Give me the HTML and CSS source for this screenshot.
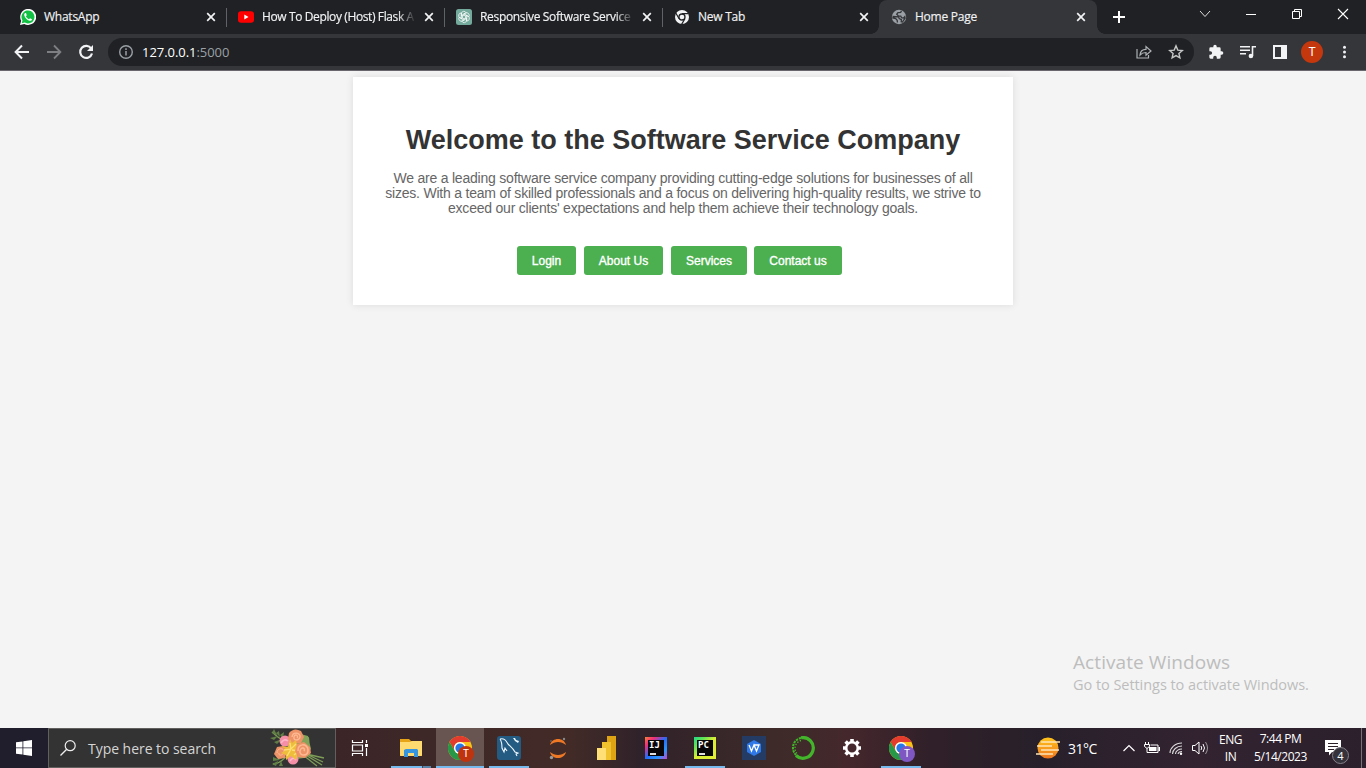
FILE: index.html
```html
<!DOCTYPE html>
<html lang="en">
<head>
<meta charset="utf-8">
<title>Home Page</title>
<link rel="stylesheet" href="styles.css">
</head>
<body>
<svg class="defs" width="0" height="0">
  <symbol id="close" viewBox="0 0 10 10"><path d="M1.200 1.200l7.600 7.600M8.800 1.200l-7.600 7.600" stroke="#f1f3f4" stroke-width="1.700"/></symbol>
  <symbol id="chrome" viewBox="0 0 24 24">
    <circle cx="12" cy="12" r="12" fill="#fbc116"/>
    <path d="M1.600 6A12 12 0 0 1 22.400 6H12a6 6 0 0 0-5.200 9z" fill="#e33b2e"/>
    <path d="M1.600 6A12 12 0 0 0 12 24l5.200-9A6 6 0 0 1 6.800 15z" fill="#279847"/>
    <circle cx="12" cy="12" r="6" fill="#fff"/><circle cx="12" cy="12" r="4.600" fill="#2678e8"/>
  </symbol>
</svg>

<header class="tabs">
  <div class="tab t1">
    <svg class="fav" viewBox="0 0 16 16"><path d="M0 16l1.200-4.200A8 8 0 1 1 4.300 14.900z" fill="#fff"/><path d="M1.700 14.300l.8-2.800A6.500 6.500 0 1 1 4.700 13.600z" fill="#12c143"/><path d="M5.200 4c-.9.500-1.200 1.500-.8 2.700.8 2.400 2.600 4.200 5 5 1.200.4 2.400-.2 2.600-1.500L10 9.200l-1 1C7.600 9.700 6.500 8.600 5.900 7.200l.9-1L6 4z" fill="#fff"/></svg>
    <span class="title">WhatsApp</span><svg class="x"><use href="#close"/></svg>
  </div>
  <div class="tab t2">
    <svg class="fav" viewBox="0 0 16 16"><rect y="2.300" width="16" height="11.400" rx="3" fill="#f00"/><path d="M6.300 5.500l4.200 2.500-4.200 2.500z" fill="#fff"/></svg>
    <span class="title fade">How To Deploy (Host) Flask A</span><svg class="x"><use href="#close"/></svg>
  </div>
  <div class="tab t3">
    <svg class="fav" viewBox="0 0 16 16"><rect width="16" height="16" rx="2.500" fill="#74aa9c"/><g fill="none" stroke="#fff" stroke-width=".7"><path id="petal" d="M8 9.900L5.300 8.400V4.900a2.600 2.600 0 0 1 4.900-1.200L7.300 5.400"/><use href="#petal" transform="rotate(60 8 8)"/><use href="#petal" transform="rotate(120 8 8)"/><use href="#petal" transform="rotate(180 8 8)"/><use href="#petal" transform="rotate(240 8 8)"/><use href="#petal" transform="rotate(300 8 8)"/></g></svg>
    <span class="title fade">Responsive Software Service</span><svg class="x"><use href="#close"/></svg>
  </div>
  <div class="tab t4">
    <svg class="fav" viewBox="0 0 16 16"><circle cx="8" cy="8" r="7" fill="#f1f3f4"/><circle cx="8" cy="8" r="3" fill="#f1f3f4" stroke="#202124" stroke-width="1.300"/><path d="M8 4.600h6.500M5.100 9.700L1.800 4M10.900 9.700L7.600 15.400" stroke="#202124" stroke-width="1.200"/></svg>
    <span class="title">New Tab</span><svg class="x"><use href="#close"/></svg>
  </div>
  <div class="tab t5">
    <svg class="fav" viewBox="0 0 16 16"><circle cx="8" cy="8" r="7.200" fill="#9aa0a6"/><path d="M10.500 1.800L9.700 3.300 7 3.600 5.700 5.300 7.300 6.800l2.500.2.700 1.700 2.100.3 1.200-1.400.3 1.400-2.700 4-1.200-.3.200-2-2.200-1.200-.6-1.700L2.200 7.500 1.900 9l2.800.5 1.500 1.700.2 2.300" fill="none" stroke="#35363a" stroke-width="1.300"/></svg>
    <span class="title">Home Page</span><svg class="x"><use href="#close"/></svg>
  </div>
  <svg class="plus" viewBox="0 0 12 12"><path d="M6 0v12M0 6h12" stroke="#fff" stroke-width="2"/></svg>
  <div class="controls">
    <svg viewBox="0 0 12 12"><path d="M1 3l5 5.500L11 3" fill="none" stroke="#ddd"/></svg>
    <svg viewBox="0 0 12 12"><path d="M1 6.500h10" stroke="#fff"/></svg>
    <svg viewBox="0 0 12 12"><path d="M1.500 3.500h7v7h-7zM3.500 3.500v-2h7v7h-2" fill="none" stroke="#fff"/></svg>
    <svg viewBox="0 0 12 12"><path d="M1 1l10 10M11 1L1 11" stroke="#fff" stroke-width="1.100"/></svg>
  </div>
</header>

<nav class="toolbar">
  <svg class="nav" viewBox="0 0 16 16"><path d="M15 8H2M8 1.500L1.600 8 8 14.500" fill="none" stroke="#f1f3f4" stroke-width="2"/></svg>
  <svg class="nav" viewBox="0 0 16 16"><path d="M1 8h13M8 1.500L14.400 8 8 14.500" fill="none" stroke="#7d7f83" stroke-width="1.800"/></svg>
  <svg class="nav" viewBox="0 0 16 16"><path d="M13.200 4.500A6 6 0 1 0 14 9.500" fill="none" stroke="#f1f3f4" stroke-width="2.200"/><path d="M15 1v6H9z" fill="#f1f3f4"/></svg>
  <div class="address">
    <svg class="info" viewBox="0 0 14 14"><circle cx="7" cy="7" r="6.300" fill="none" stroke="#9aa0a6" stroke-width="1.400"/><path d="M7 6v4.500M7 3.300v1.600" stroke="#9aa0a6" stroke-width="1.500"/></svg>
    <span class="url">127.0.0.1<span>:5000</span></span>
    <svg class="act" viewBox="0 0 16 16"><path d="M1 5v9h11.500v-3M4 11c.3-3.800 2.500-5.700 6-5.700V2.500L15 7l-5 4.300V8.500C7.500 8.500 5.800 9 4 11z" fill="none" stroke="#aeb1b5" stroke-width="1.200"/></svg>
    <svg class="act" viewBox="0 0 16 16"><path d="M8 1.900l1.800 4.200 4.500.4-3.400 3 1 4.400L8 11.600l-3.900 2.300 1-4.400-3.400-3 4.500-.4z" fill="none" stroke="#c4c7c5" stroke-width="1.400"/></svg>
  </div>
  <div class="tools">
    <svg viewBox="0 0 24 24"><path d="M20.500 11H19V7a2 2 0 0 0-2-2h-4V3.500a2.500 2.500 0 0 0-5 0V5H4a2 2 0 0 0-2 2v3.800h1.500a2.700 2.700 0 0 1 0 5.400H2V20a2 2 0 0 0 2 2h3.800v-1.500a2.700 2.700 0 0 1 5.400 0V22H17a2 2 0 0 0 2-2v-4h1.500a2.500 2.500 0 0 0 0-5z" fill="#f1f3f4"/></svg>
    <svg viewBox="0 0 16 16"><path d="M0 2.700h10M0 6.200h10M0 9.700h6M12.500 12V2.700H16" fill="none" stroke="#f1f3f4" stroke-width="1.600"/><circle cx="10.900" cy="12" r="2.300" fill="#f1f3f4"/></svg>
    <svg viewBox="0 0 16 16"><path d="M1 1h14v14H1zM3 3v10h6V3z" fill="#f1f3f4" fill-rule="evenodd"/></svg>
    <b class="avatar">T</b>
    <svg viewBox="0 0 16 16"><g fill="#f1f3f4"><circle cx="8.500" cy="3.200" r="1.500"/><circle cx="8.500" cy="8" r="1.500"/><circle cx="8.500" cy="12.800" r="1.500"/></g></svg>
  </div>
</nav>

<main class="page">
  <section class="card">
    <h1>Welcome to the Software Service Company</h1>
    <p>We are a leading software service company providing cutting-edge solutions for businesses of all<br>sizes. With a team of skilled professionals and a focus on delivering high-quality results, we strive to<br>exceed our clients' expectations and help them achieve their technology goals.</p>
    <div class="buttons"><a class="b1">Login</a><a class="b2">About Us</a><a class="b3">Services</a><a class="b4">Contact us</a></div>
  </section>
  <aside class="watermark"><div class="wm1">Activate Windows</div><div class="wm2">Go to Settings to activate Windows.</div></aside>
</main>

<footer class="taskbar">
  <div class="start"><svg viewBox="0 0 16 16"><path d="M0 2.300L6.500 1.400v6.100H0zM7.300 1.300L16 0v7.500H7.300zM0 8.300h6.500v6.200L0 13.700zM7.300 8.300H16V16l-8.700-1.300z" fill="#fff"/></svg></div>
  <div class="search">
    <svg class="lens" viewBox="0 0 16 16"><circle cx="10.200" cy="5.700" r="5" fill="none" stroke="#eee" stroke-width="1.200"/><path d="M6.700 9.300L.5 15.500" stroke="#eee" stroke-width="1.300"/></svg>
    <span class="prompt">Type here to search</span>
    <svg class="flowers" viewBox="0 0 56 38">
      <g fill="none" stroke="#7d9c55" stroke-width="1.300"><path d="M2 3c4 4 8 7 14 10M3 35c5 0 9-3 13-7M34 25l18 11M36 25l18 4M33 26l14 11M36 25l17 8"/></g>
      <g fill="#607f45"><path d="M4 0l3 6-5-2zM9 2l1 6-4-4zM14 3l-1 7-3-4zM0 9l8-2-4 4zM4 13l8-3-5 5zM3 28l7 3-7 1zM8 26l5 3-5 2zM9 37l2-5 2 5zM2 35l6-3-2 5z"/></g>
      <path d="M17 10l6-7 15 4 3 13-7 9-16 2zM32 12l7-4 1 10z" fill="#83a35a"/>
      <circle cx="15" cy="12" r="5.500" fill="#f58fa8"/><circle cx="23" cy="30" r="5.500" fill="#f58fa8"/>
      <path d="M11 14q3-5 7-2M20 32q3-5 6-1" fill="none" stroke="#ffb8c8" stroke-width="1.500"/>
      <path d="M19 4q5-6 12-2l3 6-3 6-9 1-4-5z" fill="#ed9367"/><path d="M22 8c1-6 9-4 8 0s-7 4-6 0 5-1 3 1" fill="none" stroke="#ffba94" stroke-width="1.300"/>
      <path d="M7 18l6-1 4 5-2 7-7 1-4-5z" fill="#ed9367"/><path d="M7 24c0-6 8-5 7-1s-6 4-5 1" fill="none" stroke="#ffba94"/>
      <path d="M20 10l2 4 4-3 1 5 5-1-2 5 4 2-6 3-2 6-5-4-5 4v-5l-5-2 5-3-4-4 6 1z" fill="#efbd3c"/><path d="M20 14l1 6 5-5M14 21l7-1-4 7M22 21l7 1-5 4" fill="none" stroke="#ffdf74" stroke-width="1.300"/>
      <path d="M27 15l7-2 6 5 1 6-6 5-7-1-3-6z" fill="#ed9367"/><path d="M28 22c-1-8 10-8 10-1s-9 6-8 1 6-3 4 0" fill="none" stroke="#ffba94" stroke-width="1.500"/>
    </svg>
  </div>
  <div class="apps">
    <div class="app view"><svg width="18" height="18" viewBox="0 0 18 18"><path d="M1.500 1v2.500h10V1M1.500 17v-2.500h10V17M1.500 6h10v6h-10zM15.500 1v3M15.500 9v8" fill="none" stroke="#fff" stroke-width="1.200"/><path d="M14 5h3v3h-3z" fill="#fff"/></svg></div>
    <div class="app run split"><svg width="22" height="20" viewBox="0 0 22 20"><path d="M0 1h9l2 2h10a1 1 0 0 1 1 1v14H0z" fill="#e8a417"/><path d="M0 4h10l2-1h10v14a1 1 0 0 1-1 1H1a1 1 0 0 1-1-1z" fill="#ffda70"/><path d="M4 19v-7l2-1h11l1 1v7h-4v-4H8v4z" fill="#3795df"/></svg></div>
    <div class="app run active"><svg width="24" height="24"><use href="#chrome"/></svg><b class="badge">T</b></div>
    <div class="app run"><svg width="24" height="24" viewBox="0 0 24 24"><rect width="24" height="24" rx="3" fill="#245b82"/><path d="M3 3c5-1 6 2 8 5 3 3 5 4 7 8l3 1-2 1 1 2M3 3c2 3 2 5 2 9l2 4 1-4 2 3" fill="none" stroke="#eef8ff" stroke-width="1.100"/><path d="M16 2l2 0 1 2 3 1-1 2-3-2z" fill="#eef8ff"/></svg></div>
    <div class="app"><svg width="20" height="23" viewBox="0 0 20 23"><path d="M2 8c2-8 14-8 16 0-5-4-11-4-16 0zM2 15c2 8 14 8 16 0-5 4-11 4-16 0z" fill="#ef7825"/><circle cx="16" cy="2" r="1.200" fill="#888"/><circle cx="3.500" cy="20.500" r="1.700" fill="#999"/><circle cx="3" cy="4" r=".8" fill="#777"/></svg></div>
    <div class="app"><svg width="20" height="24" viewBox="0 0 20 24"><path d="M10 0h9v24h-9z" fill="#dfa414"/><path d="M5 6h9v18H5z" fill="#efc22e"/><path d="M0 12h9v12H0z" fill="#ffdf76"/></svg></div>
    <div class="app"><span class="jb ij">IJ</span></div>
    <div class="app run"><span class="jb pc">PC</span></div>
    <div class="app"><svg width="24" height="24" viewBox="0 0 24 24"><rect width="24" height="24" fill="#243b64"/><path d="M12 4l7 4v8l-7 4-7-4V8z" fill="#2e78e8"/><path d="M7 9l2.500 6L12 9l2.500 6L17 9h-5" fill="none" stroke="#fff" stroke-width="1.300"/></svg></div>
    <div class="app"><svg width="24" height="24" viewBox="0 0 24 24"><path d="M10 1.800A10.300 10.300 0 1 1 5 19.500" fill="none" stroke="#43b52b" stroke-width="3.200"/><path d="M10 2A10 10 0 0 0 5 19" fill="none" stroke="#43b52b" stroke-width="2" stroke-dasharray="2.300 .9"/><path d="M10 4.500A8 8 0 0 0 6 17.500" fill="none" stroke="#43b52b" stroke-width="1.300" stroke-dasharray="1.400 1.500"/></svg></div>
    <div class="app"><svg width="20" height="20" viewBox="0 0 20 20"><circle cx="10" cy="10" r="5.800" fill="none" stroke="#fff" stroke-width="2.500"/><g stroke="#fff" stroke-width="3.600"><path d="M10 1v3M10 16v3M1 10h3M16 10h3M3.600 3.600l2 2M14.400 14.400l2 2M3.600 16.400l2-2M14.400 5.600l2-2"/></g></svg></div>
    <div class="app run"><svg width="24" height="24"><use href="#chrome"/></svg><b class="badge purple">T</b></div>
  </div>
  <div class="weather"><svg viewBox="0 0 24 22"><defs><linearGradient id="sun" x2="0" y2="1"><stop stop-color="#ffc51b"/><stop offset="1" stop-color="#ef7520"/></linearGradient></defs><circle cx="12" cy="11" r="10.500" fill="url(#sun)"/><path d="M5 5h19M1 9h15M5 13h18M0 17h17" stroke="#ffe5b8" stroke-width="1.600"/></svg><span>31°C</span></div>
  <div class="tray">
    <svg width="12" height="8" viewBox="0 0 12 8"><path d="M.5 7L6 1.500 11.500 7" fill="none" stroke="#fff" stroke-width="1.200"/></svg>
    <svg width="16" height="12" viewBox="0 0 16 12"><path d="M1.500 0v2M4.500 0v2M.5 2.500h5v2l-2 1.500H2.500l-2-1.500zM3 6v4.500h11V3H6.500" fill="none" stroke="#fff"/><path d="M5 5h7.500v4H5zM14.500 5H16v4h-1.500z" fill="#fff"/></svg>
    <svg width="14" height="13" viewBox="0 0 14 13"><g fill="none" stroke="#ddd" stroke-width="1.100"><path d="M1 11C1 6 6 1 13 1M3.500 12C3.500 8 7.500 4 13 4M6.500 12c0-3 3-5 6.500-5M9 12c.3-1.500 2-2.500 4-2.500"/></g><circle cx="12" cy="11.700" r="1.200" fill="#fff"/></svg>
    <svg width="17" height="14" viewBox="0 0 17 14"><path d="M.5 4.500H3L7 1v12L3 9.500H.5z" fill="none" stroke="#fff"/><path d="M9 5q1.500 2 0 4M11 3q3 4 0 8" fill="none" stroke="#fff"/><path d="M13.500 1q4 6 0 12" fill="none" stroke="#999"/></svg>
  </div>
  <div class="lang"><span>ENG</span><span>IN</span></div>
  <div class="clock"><span>7:44 PM</span><span>5/14/2023</span></div>
  <div class="notes"><svg viewBox="0 0 16 16"><path d="M0 0h16v12H7l-3 3.500V12H0z" fill="#fff"/><path d="M3 3.500h10M3 6.500h10M3 9.500h6" stroke="#2c2029"/></svg><i>4</i></div>
</footer>
</body>
</html>
```
FILE: styles.css
```css
* { box-sizing: border-box; }
body { margin: 0; width: 1366px; height: 768px; overflow: hidden; display: flex; flex-direction: column; font-family: "Open Sans", "Noto Sans", sans-serif; }
svg { display: block; flex: none; }
.defs { position: absolute; }

.tabs { height: 34px; background: #202124; display: flex; padding-left: 8px; color: #f1f3f4; }
.tab { height: 34px; flex: none; display: flex; align-items: center; width: 218px; padding: 0 11px; position: relative; }
.t1 { width: 219px; padding-left: 12px; }
.t1::after, .t2::after, .t3::after { content: ""; position: absolute; right: 0; top: 8px; width: 1px; height: 19px; background: #5f6368; }
.t4 { width: 216px; padding-right: 10px; }
.t5 { width: 218px; padding-left: 12px; background: #35363a; border-radius: 8px 8px 0 0; }
.t5::before, .t5::after { content: ""; position: absolute; bottom: 0; width: 8px; height: 8px; }
.t5::before { left: -8px; background: radial-gradient(circle at 0 0, #202124 7.500px, #35363a 8px); }
.t5::after { right: -8px; background: radial-gradient(circle at 100% 0, #202124 7.500px, #35363a 8px); }
.fav { width: 16px; height: 16px; margin-right: 8px; }
.title { flex: 1; min-width: 0; font-size: 12px; letter-spacing: -.25px; white-space: nowrap; line-height: 18px; -webkit-text-stroke: .15px #f1f3f4; }
.fade { -webkit-mask-image: linear-gradient(90deg, #000 88%, transparent 100%); mask-image: linear-gradient(90deg, #000 88%, transparent 100%); margin-right: 8px; letter-spacing: -.32px; }
.t2 .fade { letter-spacing: -.38px; }
.x { width: 10px; height: 10px; }
.plus { width: 12px; height: 12px; margin: 11px 0 0 16px; }
.controls { display: flex; gap: 34px; margin: 8px 0 0 74px; }
.controls svg { width: 12px; height: 12px; }

.toolbar { height: 37px; background: #35363a; border-bottom: 1px solid #6a666e; display: flex; align-items: center; padding-left: 14px; }
.nav { width: 16px; height: 16px; margin-right: 16px; }
.address { width: 1086px; height: 28px; margin-left: -2px; border-radius: 14px; background: #202124; display: flex; align-items: center; padding: 0 10px 0 11px; }
.info { width: 14px; height: 14px; margin-right: 9px; }
.url { flex: 1; font-size: 13px; letter-spacing: -.05px; color: #fff; line-height: 20px; }
.url span { color: #9aa0a6; }
.act { width: 16px; height: 16px; margin-left: 16px; }
.tools { display: flex; align-items: center; margin-left: 14px; gap: 16px; }
.tools svg { width: 16px; height: 16px; }
.avatar { width: 22px; height: 22px; margin: 0 -3px; border-radius: 50%; background: #c5370d; color: #fff; font: 12px/22px Roboto, sans-serif; text-align: center; }

.page { height: 657px; background: #f4f4f4; padding-top: 6px; position: relative; }
.card { width: 660px; height: 228px; margin: 0 auto; background: #fff; box-shadow: 0 0 7.500px rgba(0,0,0,.1); padding-top: 47px; text-align: center; font-family: "Liberation Sans", Arial, sans-serif; }
h1 { margin: 0; font-size: 27px; line-height: 32px; color: #333; white-space: nowrap; }
p { margin: 15px 0 0; font-size: 14px; letter-spacing: -.215px; line-height: 15px; color: #666; white-space: nowrap; }
.buttons { display: flex; margin: 30px 0 0 164px; }
.buttons a { height: 29px; line-height: 30px; border-radius: 3px; background: #4caf50; color: #fff; font-size: 12px; white-space: nowrap; -webkit-text-stroke: .35px #fff; }
.b1 { width: 59px; margin-right: 8px; }
.b2 { width: 79px; margin-right: 8px; }
.b3 { width: 76px; margin-right: 7px; }
.b4 { width: 88px; }
.watermark { position: absolute; left: 1073px; top: 578px; color: #bdbdbd; white-space: nowrap; }
.wm1 { font-size: 19px; line-height: 27px; letter-spacing: .08px; }
.wm2 { font-size: 14.500px; line-height: 18px; letter-spacing: -.05px; }

.taskbar { height: 40px; display: flex; color: #fff; background: linear-gradient(90deg, #201d2c 0, #201d2c 48px, #3b2527 336px, #422b27 570px, #30222a 640px, #3e2b29 780px, #44272c 850px, #302029 930px, #27202a 1040px, #332331 1200px, #2b202c 1366px); }
.start { width: 48px; padding: 12px 16px; }
.start svg { width: 16px; height: 16px; }
.search { width: 288px; height: 40px; background: #333; border: 1px solid #625f5f; display: flex; align-items: center; padding-left: 11px; }
.lens { width: 16px; height: 16px; margin-right: 12px; }
.prompt { width: 182px; font-size: 14px; letter-spacing: -.04px; color: #d5d5d5; white-space: nowrap; }
.flowers { width: 56px; height: 38px; }
.apps { display: flex; gap: 1px; width: 700px; padding-left: 2px; }
.app { width: 48px; height: 40px; display: flex; align-items: center; justify-content: center; position: relative; }
.view { padding-right: 4px; }
.run::after { content: ""; position: absolute; left: 4px; right: 4px; bottom: 0; height: 2px; background: #76b9ed; }
.split::after { background: linear-gradient(90deg, #76b9ed 31px, #4c4650 31px, #4c4650 32px, #5683a7 32px); }
.active { background: #685552; }
.active::after { left: 0; right: 0; }
.badge { position: absolute; left: 22px; top: 18px; width: 16px; height: 16px; border-radius: 50%; background: #bf340f; color: #fff; font: 10px/16px Roboto, sans-serif; text-align: center; }
.purple { background: #7e57c2; }
.jb { width: 22px; height: 22px; padding: 3px; text-indent: 1px; font: bold 9px/11px "DejaVu Sans Mono", monospace; letter-spacing: 0; color: #fff; position: relative; isolation: isolate; }
.jb::before { content: ""; position: absolute; z-index: -1; inset: 3px; background: #080608; }
.jb::after { content: ""; position: absolute; left: 5px; bottom: 4px; width: 6px; height: 2px; background: #ddd; }
.ij { background: linear-gradient(135deg, #f58336, #f42d78 22%, #246bfa 50%, #2797ff 75%, #c446ce); }
.pc { background: linear-gradient(135deg, #20d98b, #64e654 25%, #d9ed36 50%, #e2ed36); }
.weather { width: 84px; display: flex; align-items: center; }
.weather svg { width: 24px; height: 22px; margin-right: 8px; }
.weather span { font-size: 14px; letter-spacing: -.5px; }
.tray { width: 98px; display: flex; align-items: center; justify-content: space-between; padding: 0 9px 0 3px; }
.lang, .clock { display: flex; flex-direction: column; align-items: center; font-size: 12px; line-height: 17px; letter-spacing: -.45px; white-space: nowrap; padding-top: 3px; }
.lang { width: 25px; }
.clock { width: 75px; padding-top: 2px; line-height: 18px; }
.notes { width: 48px; padding: 12px 0 0 7px; position: relative; }
.notes::after { content: ""; position: absolute; left: 43px; top: 0; width: 1px; height: 40px; background: #77717a; }
.notes svg { width: 16px; height: 16px; }
.notes i { position: absolute; left: 14px; top: 19px; width: 17px; height: 17px; border-radius: 50%; border: 1px solid #85808a; background: #35323b; text-align: center; font: 11px/15px "Open Sans", sans-serif; }
```
